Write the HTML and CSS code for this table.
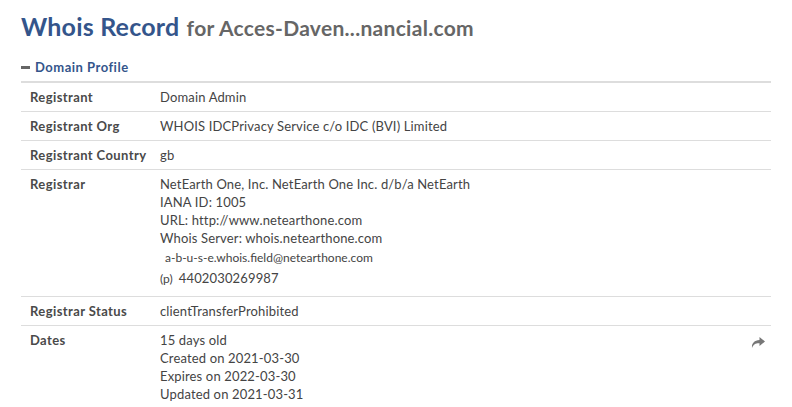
FILE: index.html
```html
<!DOCTYPE html>
<html lang="en">
<head>
    <meta charset="UTF-8">
    <title>Whois Record</title>
    <link rel="stylesheet" href="styles.css">
</head>
<body>
    <div class="page">
        <h1 class="title">Whois Record <span class="domain">for Acces-Daven...nancial.com</span></h1>
        <div class="section-head"><span class="minus"></span>Domain Profile</div>
        <table class="profile">
            <tr>
                <th>Registrant</th>
                <td>Domain Admin</td>
            </tr>
            <tr>
                <th>Registrant Org</th>
                <td>WHOIS IDCPrivacy Service c/o IDC (BVI) Limited</td>
            </tr>
            <tr>
                <th>Registrant Country</th>
                <td>gb</td>
            </tr>
            <tr>
                <th>Registrar</th>
                <td>
                    NetEarth One, Inc. NetEarth One Inc. d/b/a NetEarth<br>
                    IANA ID: 1005<br>
                    URL: http://www.netearthone.com<br>
                    Whois Server: whois.netearthone.com<br>
                    <div class="contact email">a-b-u-s-e.whois.field@netearthone.com</div>
                    <div class="contact phone">(p) <span>4402030269987</span></div>
                </td>
            </tr>
            <tr>
                <th>Registrar Status</th>
                <td>clientTransferProhibited</td>
            </tr>
            <tr>
                <th>Dates</th>
                <td>
                    <div class="dates">
                        <div>
                            15 days old<br>
                            Created on 2021-03-30<br>
                            Expires on 2022-03-30<br>
                            Updated on 2021-03-31
                        </div>
                        <svg class="share" width="14" height="12" viewBox="0 0 14 12">
                            <path d="M8.5 0 L14 4.5 L8.5 9 L8.5 6.2 C5 6 2.5 7 1 11 C0.6 6.5 3 3.3 8.5 3 Z" fill="#777"/>
                        </svg>
                    </div>
                </td>
            </tr>
        </table>
    </div>
</body>
</html>
```

FILE: styles.css
```css
body {
    margin: 0;
    font-family: Lato, "Open Sans", sans-serif;
    color: #444;
    background: #fff;
}
.page {
    padding: 11px 21px 0 21px;
}
.title {
    margin: 0;
    font-size: 25px;
    font-weight: bold;
    color: #34558b;
    line-height: 30px;
    letter-spacing: 0.2px;
}
.title .domain {
    font-size: 21px;
    color: #666;
    margin-left: 1px;
    letter-spacing: 0.3px;
}
.section-head {
    margin-top: 16px;
    font-size: 13px;
    font-weight: bold;
    color: #34558b;
    line-height: 16px;
    letter-spacing: 0.5px;
    padding-bottom: 6px;
    border-bottom: 2px solid #ddd;
    display: flex;
    align-items: center;
}
.minus {
    display: inline-block;
    width: 9px;
    height: 3px;
    background: #666;
    margin-right: 5px;
}
.profile {
    width: 100%;
    border-collapse: collapse;
    font-size: 13px;
    line-height: 18px;
}
.profile th,
.profile td {
    text-align: left;
    vertical-align: top;
    padding: 5px 0 5px 9px;
    border-bottom: 1px solid #ddd;
}
.profile th {
    width: 121px;
    font-weight: bold;
    color: #4a4a4a;
    white-space: nowrap;
    letter-spacing: 0.4px;
}
.profile td {
    color: #444;
    letter-spacing: 0.15px;
}
.contact {
    font-size: 12px;
    line-height: 20px;
    letter-spacing: 0;
}
.contact.email {
    margin-top: 1px;
    padding-left: 5px;
}
.contact.phone {
    margin-bottom: 2px;
}
.contact.phone span {
    margin-left: 3px;
    font-size: 13px;
    letter-spacing: 0.15px;
}
.dates {
    display: flex;
    justify-content: space-between;
}
.share {
    margin-top: 6px;
    margin-right: 6px;
}
```
